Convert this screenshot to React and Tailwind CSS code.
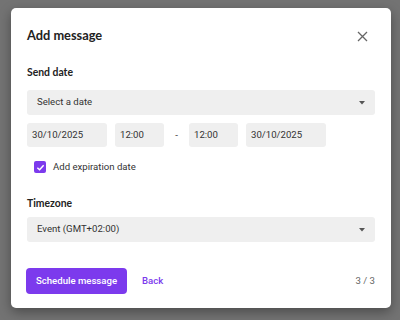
export default function App() {
  return (
    <div className="w-[400px] h-[320px] bg-[#737373] overflow-hidden pt-[8px] pl-[11px]" style={{ fontFamily: "Roboto, sans-serif" }}>
      <div className="w-[380px] h-[300px] bg-white rounded-[5px] shadow-[0_4px_12px_rgba(0,0,0,0.35)] px-4 pt-[18px] flex flex-col">
        <div className="flex items-center justify-between h-5">
          <div className="text-[12.8px] font-bold text-[#222]" style={{ fontFamily: "Lato, sans-serif" }}>Add message</div>
          <svg width="11" height="11" viewBox="0 0 11 11" className="mr-[7px]">
            <path d="M1 1L10 10M10 1L1 10" stroke="#666" strokeWidth="1.3" />
          </svg>
        </div>
        <div className="mt-[17px] h-[18px] leading-[18px] text-[10.4px] font-bold text-[#222]" style={{ fontFamily: "Lato, sans-serif" }}>Send date</div>
        <div className="mt-[9px] h-[25px] rounded-[3px] bg-[#efefef] flex items-center justify-between pl-[10px] pr-[10px] text-[9.6px] text-[#333]">
          <span>Select a date</span>
          <svg width="6" height="4" viewBox="0 0 6 4"><path d="M0 0H6L3 3.5Z" fill="#555" /></svg>
        </div>
        <div className="mt-[8px] flex items-center h-[24px] text-[9.6px] text-[#333]">
          <div className="w-[80px] h-full rounded-[3px] bg-[#efefef] flex items-center pl-[5px]">30/10/2025</div>
          <div className="ml-[8px] w-[49px] h-full rounded-[3px] bg-[#efefef] flex items-center pl-[5px]">12:00</div>
          <div className="w-[25px] text-center">-</div>
          <div className="w-[49px] h-full rounded-[3px] bg-[#efefef] flex items-center pl-[5px]">12:00</div>
          <div className="ml-[8px] w-[80px] h-full rounded-[3px] bg-[#efefef] flex items-center pl-[5px]">30/10/2025</div>
        </div>
        <div className="mt-[11px] h-[18px] flex items-center pl-[7px] text-[9.6px] text-[#333]">
          <div className="w-[12px] h-[12px] rounded-[2px] bg-[#7c3aed] flex items-center justify-center">
            <svg width="9" height="9" viewBox="0 0 10 10"><path d="M1.5 5.2L4 7.5L8.5 2.5" stroke="white" strokeWidth="1.6" fill="none" /></svg>
          </div>
          <span className="ml-[7px]">Add expiration date</span>
        </div>
        <div className="mt-[18px] h-[18px] leading-[18px] text-[10.4px] font-bold text-[#222]" style={{ fontFamily: "Lato, sans-serif" }}>Timezone</div>
        <div className="mt-[5px] h-[25px] rounded-[3px] bg-[#efefef] flex items-center justify-between pl-[10px] pr-[10px] text-[9.6px] text-[#333]">
          <span>Event (GMT+02:00)</span>
          <svg width="6" height="4" viewBox="0 0 6 4"><path d="M0 0H6L3 3.5Z" fill="#555" /></svg>
        </div>
        <div className="mt-[26px] flex items-center h-[26px]">
          <button className="h-[26px] w-[101px] ml-[-1px] rounded-[4px] bg-[#7c3aed] text-white text-[9.6px] font-medium">Schedule message</button>
          <span className="ml-[15px] text-[9.6px] font-medium text-[#7c3aed]">Back</span>
          <span className="ml-auto text-[9.6px] text-[#666]">3 / 3</span>
        </div>
      </div>
    </div>
  );
}
